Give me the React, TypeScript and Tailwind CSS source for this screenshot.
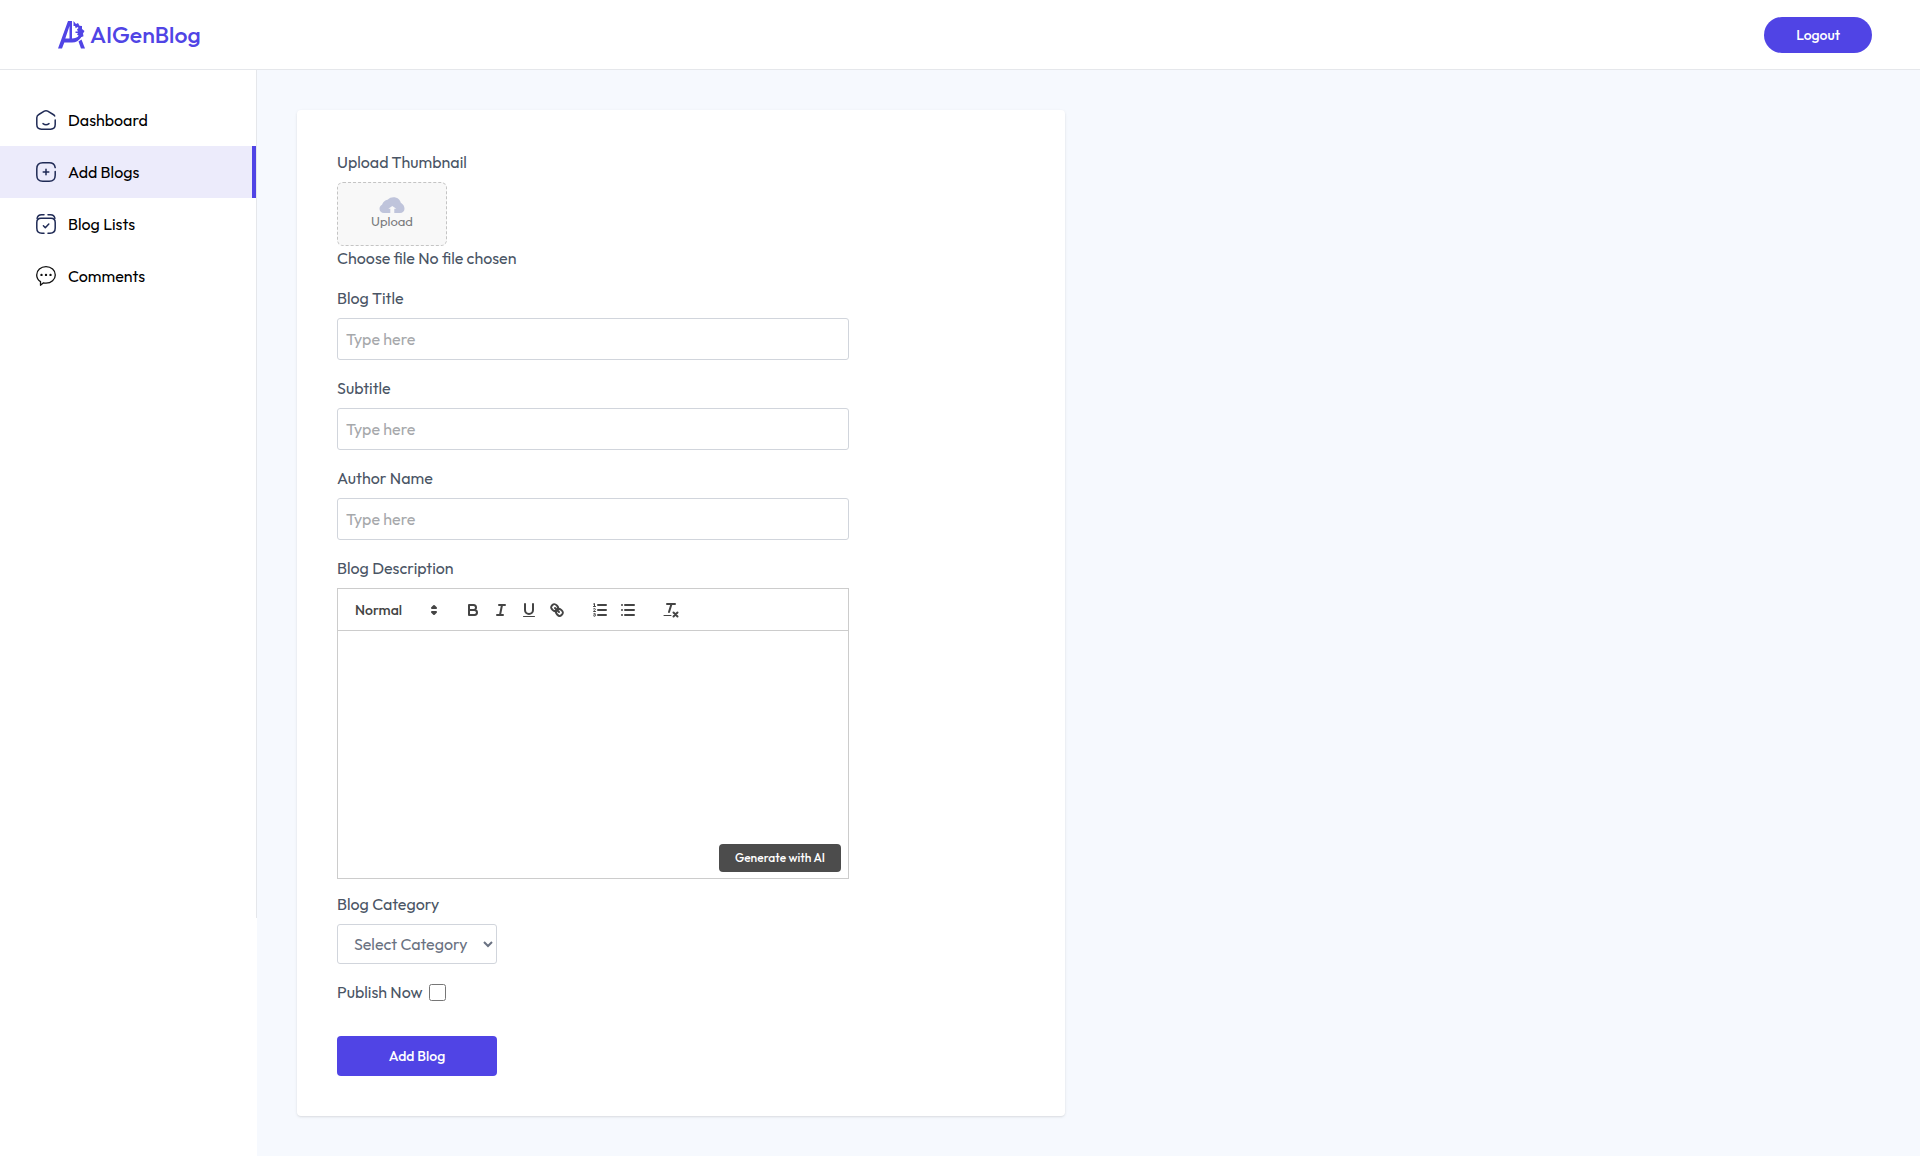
import { useState } from "react";
import type { ReactNode } from "react";

const NAV_ITEMS = [
  { label: "Dashboard", icon: <HomeIcon /> },
  { label: "Add Blogs", icon: <AddIcon /> },
  { label: "Blog Lists", icon: <ListIcon /> },
  { label: "Comments", icon: <CommentIcon /> },
];

const TEXT_FIELDS = [
  { id: "title", label: "Blog Title" },
  { id: "subtitle", label: "Subtitle" },
  { id: "author", label: "Author Name" },
];

const CATEGORIES = ["Technology", "Startup", "Lifestyle", "Finance"];

function NavSvg({ children }: { children: ReactNode }) {
  return (
    <svg
      viewBox="0 0 20 20"
      className="size-5 shrink-0"
      fill="none"
      stroke="#1f2a55"
      strokeWidth="1.5"
      strokeLinecap="round"
      strokeLinejoin="round"
    >
      {children}
    </svg>
  );
}

function HomeIcon() {
  return (
    <NavSvg>
      <path d="M19.2 10v4.6c0 3-1.6 4.6-4.6 4.6H5.4c-3 0-4.6-1.6-4.6-4.6V7.800c0-1.600.7-2.600 2-3.300L8.300 1.200c1.200-.6 2.200-.6 3.400 0l5.500 3.300c.7.4 1.200.9 1.500 1.500" />
      <path d="M7 13.600c1.800 1.300 4.200 1.300 6 0" />
    </NavSvg>
  );
}

function AddIcon() {
  return (
    <NavSvg>
      <path d="M19.200 9.600v3.600c0 4-2 6-6 6H6.800c-4 0-6-2-6-6V6.800c0-4 2-6 6-6h6.400c3.500 0 5.500 1.600 6 4.800" />
      <path d="M10 7.200v5.600M7.200 10h5.600" />
    </NavSvg>
  );
}

function ListIcon() {
  return (
    <NavSvg>
      <path d="M8 .8H5.600C3 .8 1.500 2 1.100 4.400M12 .8h2.400c2.600 0 4.100 1.200 4.500 3.600" />
      <path d="M8 19.200H6C2.600 19.200.8 17.500.8 14V8.500C.8 5.500 2.300 4.200 5 4.200h10c2.700 0 4.200 1.300 4.200 4.300V14c0 3.500-1.800 5.200-5.200 5.200h-2" />
      <path d="m7.400 11.800 1.900 1.900 3.500-3.700" />
    </NavSvg>
  );
}

function CommentIcon() {
  return (
    <svg viewBox="0 0 20 20" className="size-5 shrink-0" fill="none" stroke="#111" strokeWidth="1.300" strokeLinejoin="round">
      <path d="M10 .7c5.200 0 9.300 3.600 9.300 8.200s-4.100 8.200-9.300 8.200c-.9 0-1.700-.1-2.500-.3L4.500 19.200v-3.600C2.200 14.100.7 11.700.7 8.900.7 4.300 4.800.7 10 .7Z" />
      <g fill="#111" stroke="none">
        <circle cx="5.500" cy="8.900" r="1.200" />
        <circle cx="10" cy="8.900" r="1.200" />
        <circle cx="14.500" cy="8.900" r="1.200" />
      </g>
    </svg>
  );
}

function Logo() {
  return (
    <a href="#" className="flex items-center gap-[5px] text-[#5044e5]">
      <svg viewBox="0 0 27 28" className="h-7 w-[27px]" fill="currentColor">
        {/* left leg, stem and bowl of the A */}
        <path
          fillRule="evenodd"
          d="M10 0h4v17.500c3 0 5-.8 7-3l2 1.800c-2 3.600-5 5.200-9 5.200H6.300L4 27.500H0ZM11.500 5 7.300 17.500h4.200Z"
        />
        {/* gear half */}
        <path d="M15.500 0l2.500 3 2-1 1.500 2.800 2.500.2v3l2.500 2-1.500 2.500.5 2.700-2.500 1-1.300 1.800-2.200-1 1.500-2-2-1.500 1-1.500h-2.500v-1.500h2.500l-1-2 1.500-1.500-1-1-1.800 1.300-.7-2.300h-1.500Z" />
        <path d="m20.500 20.500 3-2 3.500 9h-4Z" />
      </svg>
      <span className="text-[23px] leading-7 font-medium">AIGenBlog</span>
    </a>
  );
}

function ToolButton({ label, children }: { label: string; children: ReactNode }) {
  return (
    <button type="button" aria-label={label} className="flex h-6 w-7 items-center justify-center">
      <svg viewBox="0 0 18 18" className="size-[18px]" fill="none" stroke="#444" strokeWidth="2" strokeLinecap="round" strokeLinejoin="round">
        {children}
      </svg>
    </button>
  );
}

function Toolbar() {
  return (
    <div className="flex h-[42px] items-center border-b border-[#ccc] px-2">
      <button type="button" className="flex h-6 w-[98px] items-center justify-between pr-px pl-[9px] text-sm font-medium text-[#444]">
        Normal
        <svg viewBox="0 0 18 18" className="size-[18px]" fill="#444" stroke="#444" strokeWidth="2" strokeLinejoin="round">
          <path d="m7 11 2 2 2-2ZM7 7l2-2 2 2Z" />
        </svg>
      </button>
      <div className="ml-[15px] flex">
        <ToolButton label="Bold">
          <path d="M5 4h4.500a2.500 2.500 0 0 1 0 5H5ZM5 9h5.500a2.500 2.500 0 0 1 0 5H5Z" />
        </ToolButton>
        <ToolButton label="Italic">
          <path d="M7 4h6M5 14h6M8 14l2-10" />
        </ToolButton>
        <ToolButton label="Underline">
          <path d="M5 3v6a4 4 0 0 0 8 0V3" />
          <path d="M3.500 15.500h11" strokeWidth="1" />
        </ToolButton>
        <ToolButton label="Link">
          <path d="m7 7 4 4" />
          <path d="M8.900 4.577a3.476 3.476 0 0 1 .36 4.679A3.476 3.476 0 0 1 4.577 8.900C3.185 7.500 2.035 6.400 4.217 4.217S7.500 3.185 8.900 4.577Z" />
          <path d="M13.423 9.100a3.476 3.476 0 0 0-4.679-.36 3.476 3.476 0 0 0 .36 4.679c1.392 1.392 2.500 2.542 4.679.36s1.032-3.283-.36-4.679Z" />
        </ToolButton>
      </div>
      <div className="ml-[15px] flex">
        <ToolButton label="Numbered list">
          <path d="M7 4h8M7 9h8M7 14h8" />
          <path d="M2.500 5.500h2M3.500 5.500v-3l-1 .5M4.500 10.500h-2c0-1 1.900-1.200 1.900-2.200 0-.8-1.300-1.200-1.900-.5M2.500 14.800c.8.900 2 .5 2-.2s-.5-.8-1-.8c.8 0 1-.4 1-.7 0-.7-1.200-.9-1.900-.3" strokeWidth="1" />
        </ToolButton>
        <ToolButton label="Bullet list">
          <path d="M6 4h9M6 9h9M6 14h9M3 4h0M3 9h0M3 14h0" />
        </ToolButton>
      </div>
      <div className="ml-[15px] flex">
        <ToolButton label="Clear formatting">
          <path d="M5 3h8M9.500 3 7 11M11.500 11.500l4 4M15.500 11.500l-4 4" />
          <path d="M2 14.500h7" strokeWidth="1" />
        </ToolButton>
      </div>
    </div>
  );
}

function UploadBox() {
  return (
    <label
      htmlFor="thumbnail"
      className="mt-2 flex h-16 w-[110px] cursor-pointer flex-col items-center justify-center rounded-md border border-dashed border-[#c4c4c4] bg-[#f8f8f8] pb-[2px] text-[13px] leading-4 text-[#7a7b7d]"
    >
      <svg viewBox="0 0 26 16" className="h-4 w-[26px]" fill="#bfc4db">
        <path d="M11.300 16H5C2.300 16 .5 14.200.5 11.800c0-1.800.9-3.300 2.500-4.100C4.500 4.500 6 3.300 8.500 2.800 10.300 1.100 12.300.3 14.500.3c3.700 0 6.400 2.100 7.300 5.400 2.300 1.400 3.700 3.500 3.700 6 0 2.500-1.800 4.300-4.500 4.300h-5.700v-4.200h2L13.300 9l-4 2.800h2Z" />
      </svg>
      Upload
    </label>
  );
}

export default function App() {
  const [active, setActive] = useState("Add Blogs");
  const [published, setPublished] = useState(false);

  return (
    <div className="flex min-h-screen flex-col bg-white font-['Outfit','Lato',sans-serif] text-base text-black">
      <header className="flex h-[70px] items-center justify-between border-b border-gray-200 pr-12 pl-[58px]">
        <Logo />
        <button type="button" className="h-9 rounded-full bg-[#5044e5] px-8 text-sm font-medium text-white">
          Logout
        </button>
      </header>

      <div className="flex flex-1">
        <aside className="w-[257px] shrink-0">
          <nav className="min-h-[848px] border-r border-gray-200 pt-6">
            {NAV_ITEMS.map(({ label, icon }) => (
              <a
                key={label}
                href="#"
                onClick={() => setActive(label)}
                className={
                  label === active
                    ? "flex items-center gap-3 border-r-4 border-[#5044e5] bg-[#ecebfb] py-[14px] pl-9"
                    : "flex items-center gap-3 py-[14px] pl-9"
                }
              >
                {icon}
                <span>{label}</span>
              </a>
            ))}
          </nav>
        </aside>

        <main className="flex-1 bg-[#f6f9fe] p-10">
          <form className="max-w-3xl rounded bg-white p-10 text-gray-600 shadow">
            <p>Upload Thumbnail</p>
            <UploadBox />
            <input id="thumbnail" type="file" className="sr-only" />
            <p>Choose file No file chosen</p>

            {TEXT_FIELDS.map(({ id, label }) => (
              <div key={id} className="mt-4">
                <label htmlFor={id}>{label}</label>
                <input
                  id={id}
                  type="text"
                  placeholder="Type here"
                  className="mt-2 block w-full max-w-lg rounded-[3px] border border-gray-300 p-2 outline-none placeholder:text-[#a6a8ab]"
                />
              </div>
            ))}

            <p className="mt-4">Blog Description</p>
            <div className="relative mt-2 flex h-[291px] max-w-lg flex-col border border-[#ccc]">
              <Toolbar />
              <div contentEditable role="textbox" aria-label="Blog Description" className="flex-1 px-4 py-3 text-sm outline-none" />
              <button
                type="button"
                className="absolute right-[7px] bottom-[6px] h-7 rounded bg-[#4c4c4c] px-4 text-xs font-medium text-white"
              >
                Generate with AI
              </button>
            </div>

            <label htmlFor="category" className="mt-[13px] block">
              Blog Category
            </label>
            <select
              id="category"
              className="mt-2 block h-10 w-40 rounded-[3px] border border-gray-300 bg-white px-3 text-gray-500 outline-none"
            >
              <option>Select Category</option>
              {CATEGORIES.map((c) => (
                <option key={c}>{c}</option>
              ))}
            </select>

            <div className="mt-4 flex h-6 items-center gap-[6px]">
              <label htmlFor="publish">Publish Now</label>
              <input
                id="publish"
                type="checkbox"
                checked={published}
                onChange={(e) => setPublished(e.target.checked)}
                className="size-[17px]"
              />
            </div>

            <button type="submit" className="mt-8 h-10 w-40 rounded bg-[#5044e5] text-sm font-medium text-white">
              Add Blog
            </button>
          </form>
        </main>
      </div>
    </div>
  );
}
